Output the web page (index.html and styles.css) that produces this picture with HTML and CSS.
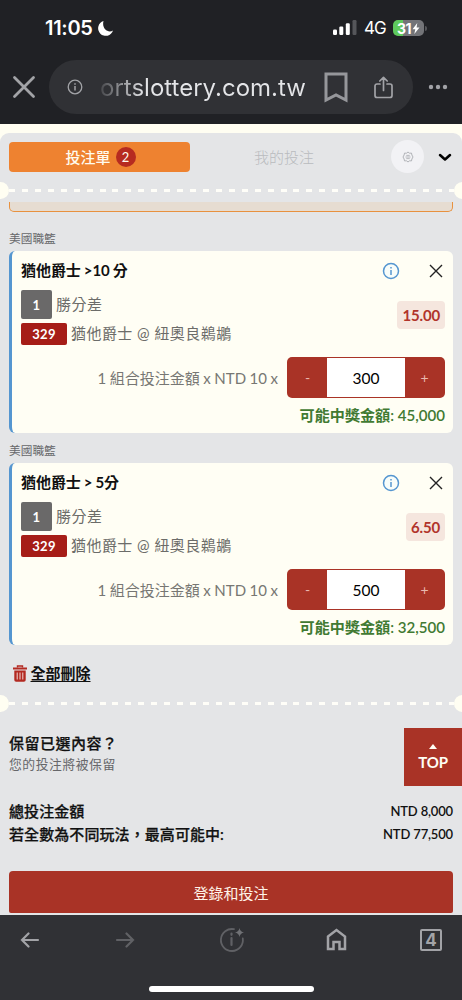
FILE: index.html
```
<!DOCTYPE html>
<html lang="zh-Hant">
<head>
<meta charset="utf-8">
<meta name="viewport" content="width=device-width">
<title>投注單</title>
<link rel="stylesheet" href="styles.css">
</head>
<body>
<div class="phone">
  <header class="browser-top">
    <div class="status">
      <span class="clock">11:05</span>
      <svg class="moon" width="17" height="17" viewBox="0 0 17 17"><path d="M6.500 1A7.600 7.600 0 1 0 16 10.500C11 13.500 4.500 8.500 6.500 1z" fill="#fff"/></svg>
      <svg class="signal" width="24" height="16" viewBox="0 0 24 16"><g fill="#fff"><rect x="0" y="9.500" width="4" height="5.500" rx="1.200"/><rect x="6.300" y="6.500" width="4" height="8.500" rx="1.200"/><rect x="12.800" y="3.300" width="4" height="11.700" rx="1.200"/></g><rect x="19.500" y="0" width="4" height="15" rx="1.200" fill="#55565a"/></svg>
      <span class="network">4G</span>
      <span class="battery"><span>31</span><svg width="8" height="11" viewBox="0 0 8 11"><path d="M5.300 0 .5 6.200h2.800L2.300 11 7.500 4.600H4.600z" fill="#fff"/></svg></span><i class="battery-tip"></i>
    </div>
    <div class="toolbar">
      <svg class="close-tab" width="24" height="24" viewBox="0 0 24 24"><path d="M2.500 2.500l19 19m0-19l-19 19" stroke="#a2a3a7" stroke-width="2.800" stroke-linecap="round"/></svg>
      <div class="address">
        <svg class="site-info" width="16" height="16" viewBox="0 0 16 16"><circle cx="8" cy="8" r="6.800" fill="none" stroke="#a2a3a7" stroke-width="1.300"/><path d="M8 7v4.500M8 4.300v1.500" stroke="#a2a3a7" stroke-width="1.500"/></svg>
        <span class="url">ortslottery.com.tw</span>
        <svg class="bookmark" width="24" height="31" viewBox="0 0 24 31"><path d="M2 2h20v26l-10-5-10 5z" fill="none" stroke="#96979b" stroke-width="3" stroke-linejoin="miter"/></svg>
        <svg class="share" width="19" height="23" viewBox="0 0 19 23"><g fill="none" stroke="#a2a3a7" stroke-width="1.700" stroke-linecap="round" stroke-linejoin="round"><path d="M6 8H3a2 2 0 0 0-2 2v9.500a2 2 0 0 0 2 2h13a2 2 0 0 0 2-2V10a2 2 0 0 0-2-2h-3M9.500 14.500V1.500M5.800 5l3.700-3.700L13.200 5"/></g></svg>
      </div>
      <svg class="more" width="20" height="6" viewBox="0 0 20 6" fill="#a2a3a7"><circle cx="3" cy="3" r="2.200"/><circle cx="10" cy="3" r="2.200"/><circle cx="17" cy="3" r="2.200"/></svg>
    </div>
  </header>

  <main class="page">
    <section class="slip-head">
      <div class="tabs">
        <button class="tab active">投注單<span class="count">2</span></button>
        <span class="tab idle">我的投注</span>
        <button class="gear"><svg width="12" height="12" viewBox="0 0 12 12" fill="none" stroke="#a9abb0" stroke-width=".9"><path d="M6 1l1.500 1.200 2-.1.400 1.900L11 6 9.900 8l-.4 1.900-2-.1L6 11 4.500 9.800l-2 .1L2.100 8 1 6l1.100-2 .4-1.900 2 .1z"/><path d="M3.500 6h5M4.300 4.400h3.400M4.300 7.600h3.400" stroke-width=".8"/></svg></button>
        <svg class="chevron" width="14" height="9" viewBox="0 0 14 9"><path d="M2 2l5 4.500L12 2" fill="none" stroke="#000" stroke-width="2.500" stroke-linecap="round" stroke-linejoin="round"/></svg>
      </div>
      <div class="perforation"><i class="notch"></i><i class="dashes"></i><i class="notch right"></i></div>
    </section>

    <div class="notice-edge"></div>

    <h2 class="league">美國職籃</h2>
    <article class="bet">
      <div class="bet-title"><h3>猶他爵士 &gt;10 分</h3>
        <svg class="info" width="18" height="18" viewBox="0 0 18 18"><circle cx="9" cy="9" r="7.500" fill="#f8fdfa" stroke="#5596d0" stroke-width="1.500"/><path d="M9 8v5M9 5v1.600" stroke="#5596d0" stroke-width="1.500"/></svg>
        <svg class="remove" width="14" height="14" viewBox="0 0 14 14"><path d="M1 1l12 12M13 1L1 13" stroke="#222" stroke-width="1.400"/></svg></div>
      <div class="bet-body">
        <div class="selection"><div class="row"><b class="tag gray">1</b><span>勝分差</span></div><div class="row match"><b class="tag red">329</b><span>猶他爵士 @ 紐奧良鵜鶘</span></div></div>
        <b class="odds">15.00</b>
      </div>
      <div class="stake"><span class="formula">1 組合投注金額 x NTD 10 x</span><div class="stepper"><button>-</button><span class="amount">300</span><button>+</button></div></div>
      <p class="payout">可能中獎金額: 45,000</p>
    </article>

    <h2 class="league second">美國職籃</h2>
    <article class="bet">
      <div class="bet-title"><h3>猶他爵士 &gt; 5分</h3>
        <svg class="info" width="18" height="18" viewBox="0 0 18 18"><circle cx="9" cy="9" r="7.500" fill="#f8fdfa" stroke="#5596d0" stroke-width="1.500"/><path d="M9 8v5M9 5v1.600" stroke="#5596d0" stroke-width="1.500"/></svg>
        <svg class="remove" width="14" height="14" viewBox="0 0 14 14"><path d="M1 1l12 12M13 1L1 13" stroke="#222" stroke-width="1.400"/></svg></div>
      <div class="bet-body">
        <div class="selection"><div class="row"><b class="tag gray">1</b><span>勝分差</span></div><div class="row match"><b class="tag red">329</b><span>猶他爵士 @ 紐奧良鵜鶘</span></div></div>
        <b class="odds">6.50</b>
      </div>
      <div class="stake"><span class="formula">1 組合投注金額 x NTD 10 x</span><div class="stepper"><button>-</button><span class="amount">500</span><button>+</button></div></div>
      <p class="payout">可能中獎金額: 32,500</p>
    </article>

    <div class="clear-all">
      <svg width="14" height="17" viewBox="0 0 14 17"><path d="M4.500 2.500V1h5v1.500" fill="none" stroke="#b32a22" stroke-width="1.400"/><path d="M0 2.500h14v2H0zM1.300 5.500h11.400V15a1.800 1.800 0 0 1-1.800 1.800H3.100A1.800 1.800 0 0 1 1.300 15z" fill="#b32a22"/><path d="M4.200 7.500v7M7 7.500v7M9.800 7.500v7" stroke="#f0d8d6" stroke-width="1"/></svg>
      <a>全部刪除</a>
    </div>
    <div class="perforation"><i class="notch"></i><i class="dashes"></i><i class="notch right"></i></div>

    <section class="keep">
      <div class="keep-text"><h3>保留已選內容？</h3><p>您的投注將被保留</p></div>
      <button class="top"><svg width="8" height="5" viewBox="0 0 8 5"><path d="M4 0l4 5H0z" fill="#fffef5"/></svg>TOP</button>
    </section>
    <section class="totals">
      <div class="total"><span>總投注金額</span><b>NTD 8,000</b></div>
      <div class="total"><span>若全數為不同玩法，最高可能中:</span><b>NTD 77,500</b></div>
    </section>
    <button class="submit">登錄和投注</button>
  </main>

  <footer class="browser-bottom">
    <nav class="nav">
      <svg class="back" width="20" height="16" viewBox="0 0 20 16"><path d="M18 8H2M8.500 1.500L2 8l6.500 6.500" fill="none" stroke="#a2a3a7" stroke-width="2.200" stroke-linecap="round"/></svg>
      <svg class="forward" width="20" height="16" viewBox="0 0 20 16"><path d="M2 8h16M11.500 1.500L18 8l-6.500 6.500" fill="none" stroke="#606165" stroke-width="2.200" stroke-linecap="round"/></svg>
      <svg class="assist" width="26" height="26" viewBox="0 0 26 26"><g fill="none" stroke="#606165" stroke-width="1.800" stroke-linecap="round"><path d="M15 2.200A11 11 0 1 0 23.800 11.500"/><path d="M12.500 11v7M12.500 6.500v1.300" stroke-width="2.200"/></g><path d="M20.500 1q.7 3.600 4.500 4.500-3.800.9-4.500 4.500-.7-3.600-4.500-4.500 3.800-.9 4.500-4.500z" fill="#707175"/></svg>
      <svg class="home" width="21" height="23" viewBox="0 0 21 23"><path d="M2 8.500L10.500 2 19 8.500V21h-5.500v-7h-6v7H2z" fill="none" stroke="#a2a3a7" stroke-width="2.500"/></svg>
      <span class="tab-count">4</span>
    </nav>
    <div class="home-bar"></div>
  </footer>
</div>
</body>
</html>
```
FILE: styles.css
```
* { box-sizing: border-box; }
body { margin: 0; background: #e4e5e7; }
h2, h3, p { margin: 0; }
button { border: 0; padding: 0; margin: 0; font: inherit; }
svg { display: block; flex: none; }
i { display: block; }

.phone {
  width: 462px; height: 1000px; overflow: hidden;
  display: flex; flex-direction: column;
  font-family: Lato, "Noto Sans CJK TC", sans-serif;
}

/* browser chrome */
.browser-top { height: 124px; flex: none; background: #202125; font-family: Inter, "Liberation Sans", sans-serif; }
.status { height: 46px; padding: 10px 35px 0 45px; display: flex; align-items: center; color: #fff; }
.clock { font-size: 20px; font-weight: 600; line-height: 24px; width: 49px; letter-spacing: -.3px; white-space: nowrap; }
.moon { margin-left: 3px; }
.signal { margin-left: auto; }
.network { font-size: 17px; margin-left: 7px; letter-spacing: -.9px; width: 21px; }
.battery { width: 31px; height: 16px; margin-left: 8px; border-radius: 5px; background: linear-gradient(90deg, #5fca5d 10px, #737478 10px); display: flex; align-items: center; justify-content: center; gap: 1px; font-size: 14px; font-weight: 700; letter-spacing: -.5px; }
.battery-tip { width: 2px; height: 5px; background: #55565a; margin-left: 1px; border-radius: 0 2px 2px 0; }
.toolbar { display: flex; align-items: center; padding: 14px 14px 0 12px; }
.address { width: 364px; height: 54px; margin-left: 13px; padding: 0 20px 0 18px; border-radius: 27px; background: #303135; display: flex; align-items: center; }
.url { width: 208px; margin-left: 17px; margin-right: -1px; font-size: 24px; letter-spacing: 0; line-height: 30px; white-space: nowrap; background: linear-gradient(90deg, #47484c, #e4e5e8 44px); -webkit-background-clip: text; background-clip: text; color: transparent; position: relative; top: 1px; }
.bookmark { margin-left: 18px; }
.share { margin-left: 26px; }
.more { margin-left: 15px; }

/* page */
.page { flex: 1; min-height: 0; overflow: hidden; background: #e4e5e7; }
.slip-head { height: 78px; padding-top: 9px; background: #fffef2; }
.tabs { height: 47px; padding: 0 9px; background: #e4e5e7; border-radius: 9px 9px 0 0; display: flex; align-items: center; }
.slip-head .perforation { height: 22px; padding-bottom: 2px; }
.tab { font-size: 15px; line-height: 30px; text-align: center; }
.active { width: 181px; height: 30px; padding-left: 2px; border-radius: 4px; background: #ee8230; color: #fffbee; display: flex; align-items: center; justify-content: center; gap: 5px; font-weight: 500; }
.count { width: 20px; height: 20px; border-radius: 50%; background: #b62b20; line-height: 20px; font-size: 13px; font-weight: 400; }
.idle { width: 188px; color: #b9bbbe; font-weight: 300; }
.gear { width: 33px; height: 33px; margin-left: 13px; border-radius: 50%; background: #f2f2f5; display: grid; place-items: center; flex: none; }
.chevron { margin-left: 14px; position: relative; top: 1px; }
.perforation { height: 18px; background: #e4e5e7; display: flex; align-items: center; overflow: hidden; }
.notch { width: 17px; height: 17px; margin-left: -8.500px; border-radius: 50%; background: #fffef2; flex: none; }
.notch.right { margin: 0 -8.500px 0 0; }
.dashes { flex: 1; height: 3px; background: repeating-linear-gradient(90deg, #fffef8 0 6px, transparent 6px 12.930px); }
.notice-edge { height: 10px; margin: 0 9px; border: solid #e8913f; border-width: 0 1px 1.500px; border-radius: 0 0 5px 5px; background: #e6dcd1; }
.league { font-size: 11.700px; line-height: 18px; font-weight: 400; color: #66676a; padding: 17px 9px 4px; }
.league.second { padding-top: 8px; }
.bet { height: 182px; margin: 0 9px; padding: 9px 8px 0 9px; border-left: 3px solid #5596d0; border-radius: 6px; background: #fffef4; }
.bet-title { display: flex; align-items: center; height: 21px; }
.bet-title h3 { flex: 1; font-size: 15px; line-height: 21px; font-weight: 700; letter-spacing: -.05px; word-spacing: -.6px; color: #111; }
.remove { margin: 0 2px 0 29px; }
.bet-body { display: flex; justify-content: space-between; margin-top: 9px; height: 56px; color: #6c6c69; }
.row { display: flex; align-items: center; gap: 4px; height: 29px; font-size: 15px; letter-spacing: .45px; white-space: nowrap; }
.row span { padding-bottom: 2px; }
.row.match { margin-top: 4px; height: 22px; gap: 4px; }
.row.match span { padding-bottom: 3px; }
.tag { color: #fff; text-align: center; border-radius: 2px; font-size: 13px; letter-spacing: .3px; }
.gray { width: 31px; height: 29px; line-height: 30px; background: #6a6969; }
.red { width: 46px; height: 22px; line-height: 22px; background: #a61d17; }
.odds { height: 28px; margin-top: 11px; padding: 0 5px; line-height: 28px; font-size: 15px; letter-spacing: -.15px; color: #b1342b; background: #f5e6de; border-radius: 4px; }
.stake { height: 41px; margin-top: 11px; display: flex; align-items: center; justify-content: flex-end; gap: 9px; }
.formula { font-size: 15px; word-spacing: -.3px; color: #777773; white-space: nowrap; }
.stepper { width: 158px; height: 41px; padding: 1px; border-radius: 5px; background: #a93326; display: flex; }
.stepper button { width: 39px; background: none; color: #e9b8ae; font-size: 14px; }
.amount { flex: 1; background: #fff; color: #000; font-size: 15.500px; line-height: 40px; text-align: center; }
.payout { text-align: right; margin-top: 6px; line-height: 22px; font-size: 15.100px; font-weight: 600; color: #417a32; }
.clear-all { display: flex; align-items: center; gap: 4px; padding: 7px 12.500px 0; height: 49px; }
.clear-all a { font-size: 15px; line-height: 22px; font-weight: 600; text-decoration: underline; text-underline-offset: 2px; text-decoration-thickness: 1.300px; color: #111; }
.keep { display: flex; justify-content: space-between; align-items: flex-start; padding-left: 9px; margin-top: 16px; height: 58px; }
.keep-text { padding-top: 4px; }
.keep h3 { font-size: 15px; line-height: 22px; letter-spacing: .5px; font-weight: 500; -webkit-text-stroke: .25px #111; color: #111; }
.keep p { font-size: 12.800px; line-height: 20px; letter-spacing: .55px; color: #66676a; }
.top { width: 58px; height: 58px; background: #a93326; color: #fffef5; font-size: 15px; line-height: 18px; font-weight: 700; letter-spacing: -.2px; display: flex; flex-direction: column; align-items: center; justify-content: center; gap: 4px; }
.totals { padding: 14px 9px 0; }
.total { display: flex; justify-content: space-between; align-items: center; height: 23px; font-size: 15px; line-height: 23px; font-weight: 500; color: #111; white-space: nowrap; }
.total span { -webkit-text-stroke: .25px #111; letter-spacing: .08px; }
.total b { font-size: 13px; font-weight: 600; letter-spacing: -.16px; }
.submit { display: block; width: 444px; height: 42px; margin: 25px 9px 0; border-radius: 4px 4px 2px 2px; background: #a93326; color: #fff3e8; font-size: 15px; }

.browser-bottom { height: 85px; flex: none; background: #303135; }
.nav { height: 49px; padding-left: 20px; display: flex; align-items: center; }
.forward { margin-left: 75px; }
.assist { margin-left: 84px; }
.home { margin-left: 81px; }
.tab-count { margin-left: 73px; width: 22px; height: 22px; border: 2.200px solid #a2a3a7; border-radius: 2px; color: #a2a3a7; font: 700 17px/18px Inter, sans-serif; text-align: center; }
.home-bar { width: 165px; height: 6px; margin: 22px auto 0; border-radius: 3px; background: #fff; }
```
